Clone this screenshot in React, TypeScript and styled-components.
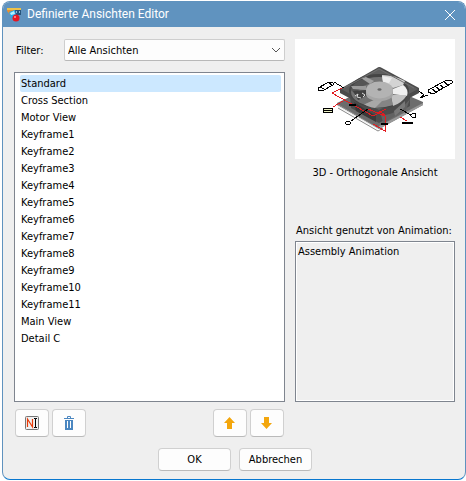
import React, { useState } from "react";
import styled, { createGlobalStyle } from "styled-components";

const GlobalStyle = createGlobalStyle`
  * { box-sizing: border-box; }
  body { margin: 0; background: #fff; }
  body, button, select {
    font-family: "DejaVu Sans Condensed", "DejaVu Sans", sans-serif;
    font-size: 11px;
    line-height: 17px;
    color: #000;
  }
`;

const Dialog = styled.main`
  display: flex;
  flex-direction: column;
  min-height: calc(100vh - 2px);
  margin: 1px 0 1px 2px;
  border: 1px solid #5f92be;
  border-bottom-color: #0877cf;
  border-radius: 8px;
  overflow: hidden;
  background: #efefef;
`;

const TitleBar = styled.header`
  display: flex;
  align-items: center;
  gap: 5px;
  height: 25px;
  padding: 0 8px 0 4px;
  background: #6093bf;
`;

const Title = styled.h1`
  flex: 1;
  margin: 0;
  font-family: Roboto, sans-serif;
  font-size: 12px;
  font-weight: 400;
  color: #fff;
`;

const CloseButton = styled.button`
  display: flex;
  padding: 1px;
  border: 0;
  background: none;
`;

const Content = styled.div`
  flex: 1;
  display: grid;
  grid-template-columns: 1fr 160px;
  grid-template-rows: 1fr auto;
  column-gap: 10px;
  padding: 12px 10px 0 11px;
`;

const Column = styled.section`
  display: flex;
  flex-direction: column;
`;

const FilterRow = styled.div`
  display: flex;
  align-items: center;
  margin-bottom: 11px;
  padding-left: 2px;
`;

const FilterLabel = styled.label`
  width: 48px;
`;

const SelectBox = styled.div`
  position: relative;
  flex: 1;
  display: flex;

  svg {
    position: absolute;
    right: 4px;
    top: 7px;
    pointer-events: none;
  }
`;

const Select = styled.select`
  flex: 1;
  height: 22px;
  padding: 0 20px 0 3px;
  appearance: none;
  border: 1px solid #cecece;
  border-bottom-color: #b8b8b8;
  border-radius: 2px;
  background: #fdfdfd;
`;

const ListBox = styled.ul<{ $readOnly?: boolean }>`
  flex: 1;
  margin: 0;
  padding: ${(p) => (p.$readOnly ? "1px 0" : "2px 3px 1px 5px")};
  list-style: none;
  border: 1px solid #7f858f;
  background: ${(p) => (p.$readOnly ? "#efefef" : "#fff")};
  box-shadow: ${(p) => (p.$readOnly ? "inset 0 0 0 1px #fff" : "none")};
`;

const ListItem = styled.li<{ $selected?: boolean }>`
  height: 17px;
  padding: 0 2px 0 1px;
  border-radius: 2px;
  background: ${(p) => (p.$selected ? "#cce8ff" : "transparent")};
`;

const UsageItem = styled.li`
  padding: 0 2px;
`;

const Preview = styled.figure`
  margin: 0 0 41px;
  text-align: center;

  svg {
    display: block;
    width: 100%;
    background: #fff;
  }

  figcaption {
    padding-top: 5px;
  }
`;

const UsageLabel = styled.h2`
  margin: 0 0 2px;
  padding-left: 1px;
  font-size: 11px;
  font-weight: 400;
  white-space: nowrap;
`;

const Tools = styled.div`
  display: flex;
  gap: 3px;
  padding: 7px 1px 0;
`;

const Spacer = styled.span`
  flex: 1;
`;

const Button = styled.button<{ $width: number; $height: number }>`
  display: flex;
  align-items: center;
  justify-content: center;
  width: ${(p) => p.$width}px;
  height: ${(p) => p.$height}px;
  padding: 0;
  border: 1px solid #d0d0d0;
  border-bottom-color: #bababa;
  border-radius: 4px;
  background: #fdfdfd;
`;

const Footer = styled.footer`
  display: flex;
  justify-content: center;
  gap: 8px;
  padding: 11px 0 8px 2px;
`;

const AppIcon = () => (
  <svg width="15" height="15" viewBox="0 0 15 15" aria-hidden="true">
    <path d="M0 2V1H14V3H0Z" fill="#edc24a" />
    <path d="M0 3H7V5H5L7 9H4L0 4Z" fill="#e79134" />
    <path d="M2 5L8 3L9 10L4 11Z" fill="#20a9ee" />
    <path d="M3 6L7 4L8 7L4 8Z" fill="#b4f1ff" />
    <path d="M8 3H14V8H9Z" fill="#26547b" />
    <path d="M9.5 4V6M12.5 4V6" stroke="#8bb8d8" fill="none" />
    <circle cx="9" cy="11" r="3.5" fill="#e51622" />
    <circle cx="8" cy="10" r="1" fill="#ff9c98" />
  </svg>
);

const CloseIcon = () => (
  <svg width="12" height="12" viewBox="0 0 12 12" aria-hidden="true">
    <path d="M1 1L11 11M11 1L1 11" stroke="#fff" strokeWidth="1" />
  </svg>
);

const Chevron = () => (
  <svg width="10" height="8" viewBox="0 0 10 8" aria-hidden="true">
    <path d="M1 2L5 6L9 2" fill="none" stroke="#555" />
  </svg>
);

const RenameIcon = () => (
  <svg width="14" height="14" viewBox="0 0 14 14" aria-hidden="true">
    <rect x=".5" y=".5" width="13" height="13" rx="1" fill="#f1f1f1" stroke="#777" />
    <path d="M2.5 11V3L7.5 11V3" fill="none" stroke="#e83b09" strokeWidth="1.2" />
    <path d="M9 2.5H10.5V11.5H9M12 2.5H10.5M12 11.5H10.5" fill="none" stroke="#000" />
  </svg>
);

const TrashIcon = () => (
  <svg width="12" height="14" viewBox="0 0 12 14" aria-hidden="true">
    <path d="M4.5 2V.5H7.5V2M1 2.5H11" fill="none" stroke="#4a86c0" />
    <path d="M2 4H10V14H2ZM4 5V12H5V5ZM7 5V12H8V5Z" fill="#4a86c0" fillRule="evenodd" />
  </svg>
);

const ArrowIcon = ({ down = false }: { down?: boolean }) => (
  <svg width="12" height="12" viewBox="0 0 12 12" aria-hidden="true">
    <path
      d={down ? "M3 0H8V6H11L5.5 12L0 6H3Z" : "M5.5 0L11 6H8V12H3V6H0Z"}
      fill="#f3a60d"
    />
  </svg>
);

const FanDrawing = () => (
  <svg viewBox="0 0 160 120" role="img" aria-label="3D-Ansicht eines Lüfters">
    <path d="M42 64L84 44L128 63V66L84 90L42 66Z" fill="#6c6c6c" />
    <path d="M84 90L128 66V64L84 87Z" fill="#999" />
    <path d="M42 65L83 89M43 69L83 92L88 89" fill="none" stroke="#8a8a8a" />
    <path d="M43 67L83 90" stroke="#e8e8e8" />
    <path d="M55 56L84 73L115 56V67L84 84L56 69Z" fill="#4c4c4c" />
    <path d="M59 63L81 77V83L61 72Z" fill="#3a3a3a" />
    <path d="M86 76Q101 77 115 60L111 71L88 84Z" fill="#626262" />
    <path d="M99 72L110 62V68L100 77Z" fill="#787878" />
    <path d="M45 50L82 29Q84 27 87 29L124 49V54L84 75L45 54Z" fill="#4b4b4b" />
    <path d="M46 50L84 29L123 50L84 71Z" fill="#5e5e5e" />
    <ellipse cx="84" cy="52" rx="30" ry="17" fill="#454545" />
    <ellipse cx="84" cy="53" rx="28" ry="15" fill="#747474" />
    <path d="M56 51Q59 42 71 39L76 44L68 47L60 55Z" fill="#555" />
    <path d="M66 39L71 38L79 42L75 45Z" fill="#a2a2a2" />
    <path d="M58 52L71 51L75 58L63 61Z" fill="#414141" />
    <path d="M56 47L71 47V51L58 50Z" fill="#9a9a9a" />
    <path d="M88 43L87 36Q99 36 110 42L108 46L98 49Z" fill="#d4d4d4" />
    <path d="M87 37L97 39L94 44L88 43Z" fill="#ececec" />
    <path d="M98 50L108 46Q114 50 112 57L98 55Z" fill="#efefef" />
    <path d="M96 56L112 56Q107 64 98 67Z" fill="#c2c2c2" />
    <path d="M84 60L95 56L98 66Q89 69 80 69Z" fill="#858585" />
    <path d="M80 60L88 61L80 69Q73 68 69 65Z" fill="#a8a8a8" />
    <path d="M70 57L81 60L70 65L64 61Z" fill="#737373" />
    <path d="M71 51V56C74 64 95 64 98 56V51Z" fill="#a5a5a5" />
    <ellipse cx="84.5" cy="51" rx="13.5" ry="8.5" fill="#b3b3b3" />
    <ellipse cx="84.5" cy="50.5" rx="2" ry="1.2" fill="#666" />
    <path d="M60 57L63 55L62 58L66 59M67 54L70 56L68 58" stroke="#ddd" fill="none" />
    <path d="M49 49L84 30L119 49" stroke="#707070" fill="none" />
    <g fill="none" stroke="#e21b20" shapeRendering="crispEdges">
      <path d="M49 48L37 54L78 77L91 70" />
      <path d="M48 62L38 68M73 70L90 77V92L78 85M84 72L90 76M105 78L112 82" />
    </g>
    <g fill="none" stroke="#000" shapeRendering="crispEdges">
      <path d="M39 43L49 49M73 70L56 82M105 70L116 76M124 52L129 56L125 59L133 56" />
      <path d="M23 49L34 43L38 44V46L27 52L23 51ZM25 48L29 50M34 43L37 47" />
      <path d="M133 51L152 41L157 42V44L138 55L133 53ZM137 50L141 53M141 48L145 51M145 46L149 49M149 43L153 46" />
    </g>
    <g stroke="#000" fill="#fff" shapeRendering="crispEdges">
      <rect x="28.5" y="69.5" width="9" height="4" fill="#edf1c4" />
      <path d="M29 71.5H37" />
      <ellipse cx="53" cy="84" rx="2.5" ry="1.5" />
      <ellipse cx="118.500" cy="76.500" rx="2.5" ry="2" />
    </g>
    <path d="M54 66H61M86 85H93M107 84H118" stroke="#000" strokeWidth="2" />
  </svg>
);

const views = [
  "Standard",
  "Cross Section",
  "Motor View",
  ...Array.from({ length: 11 }, (_, i) => `Keyframe${i + 1}`),
  "Main View",
  "Detail C",
];

export default function App() {
  const [selected, setSelected] = useState("Standard");

  return (
    <>
      <GlobalStyle />
      <Dialog>
        <TitleBar>
          <AppIcon />
          <Title>Definierte Ansichten Editor</Title>
          <CloseButton type="button" aria-label="Schließen">
            <CloseIcon />
          </CloseButton>
        </TitleBar>
        <Content>
          <Column>
            <FilterRow>
              <FilterLabel htmlFor="filter">Filter:</FilterLabel>
              <SelectBox>
                <Select id="filter">
                  <option>Alle Ansichten</option>
                </Select>
                <Chevron />
              </SelectBox>
            </FilterRow>
            <ListBox role="listbox" aria-label="Ansichten" tabIndex={0}>
              {views.map((view) => (
                <ListItem
                  key={view}
                  role="option"
                  aria-selected={view === selected}
                  $selected={view === selected}
                  onClick={() => setSelected(view)}
                >
                  {view}
                </ListItem>
              ))}
            </ListBox>
          </Column>
          <Column>
            <Preview>
              <FanDrawing />
              <figcaption>3D - Orthogonale Ansicht</figcaption>
            </Preview>
            <UsageLabel id="usage">Ansicht genutzt von Animation:</UsageLabel>
            <ListBox $readOnly aria-labelledby="usage">
              <UsageItem>Assembly Animation</UsageItem>
            </ListBox>
          </Column>
          <Tools>
            <Button type="button" $width={34} $height={28} aria-label="Umbenennen">
              <RenameIcon />
            </Button>
            <Button type="button" $width={34} $height={28} aria-label="Löschen">
              <TrashIcon />
            </Button>
            <Spacer />
            <Button type="button" $width={34} $height={28} aria-label="Nach oben">
              <ArrowIcon />
            </Button>
            <Button type="button" $width={34} $height={28} aria-label="Nach unten">
              <ArrowIcon down />
            </Button>
          </Tools>
        </Content>
        <Footer>
          <Button type="button" $width={73} $height={23}>OK</Button>
          <Button type="button" $width={73} $height={23}>Abbrechen</Button>
        </Footer>
      </Dialog>
    </>
  );
}
